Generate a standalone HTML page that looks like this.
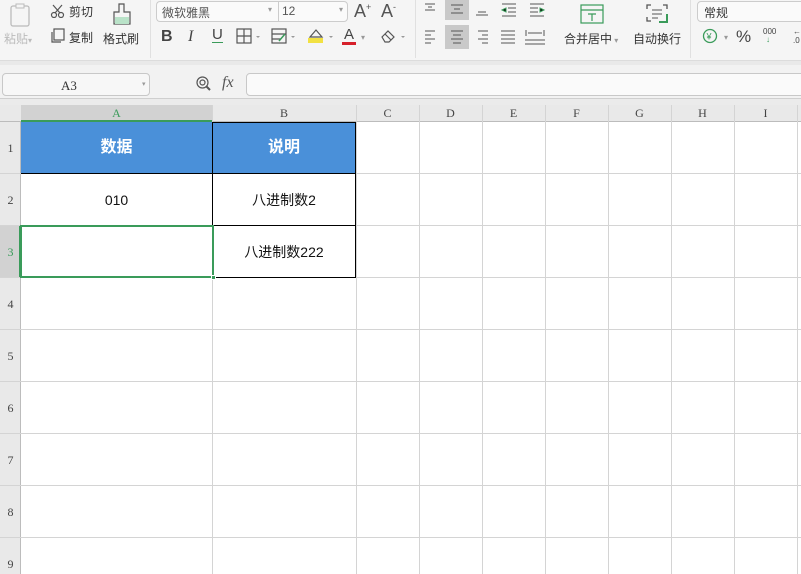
<!DOCTYPE html>
<html><head><meta charset="utf-8"><style>
*{margin:0;padding:0;box-sizing:border-box}
body{width:801px;height:574px;overflow:hidden;background:#fff;position:relative;font-family:"Liberation Sans","Noto Sans CJK SC",sans-serif;font-size:12px;color:#333}
.a{position:absolute}
.t{position:absolute;white-space:nowrap}
.vl{position:absolute;width:1px;background:#d4d4d4}
.hl{position:absolute;height:1px;background:#d4d4d4}
.ch{position:absolute;top:105px;height:17px;text-align:center;font-family:"Liberation Serif",serif;font-size:12px;color:#444;line-height:17px}
.rh{position:absolute;left:0;width:21px;text-align:center;font-family:"Liberation Serif",serif;font-size:12px;color:#444}
.ic{stroke:#555;fill:none;stroke-width:1.2}
</style></head><body>
<!-- toolbar -->
<div class="a" style="left:0;top:0;width:801px;height:60px;background:#f5f5f5"></div>
<div class="a" style="left:0;top:60px;width:801px;height:5px;background:#e9e9e9;border-top:1px solid #dcdcdc"></div>
<div class="a" style="left:0;top:65px;width:801px;height:34px;background:#f2f2f2;border-bottom:1px solid #cfcfcf"></div>
<div class="a" style="left:0;top:99px;width:801px;height:6px;background:#ebebeb"></div>
<!-- separators -->
<div class="a" style="left:150px;top:0;width:1px;height:58px;background:#e0e0e0"></div>
<div class="a" style="left:415px;top:0;width:1px;height:58px;background:#e0e0e0"></div>
<div class="a" style="left:690px;top:0;width:1px;height:58px;background:#e0e0e0"></div>
<!-- paste -->
<svg class="a" style="left:6px;top:2px" width="30" height="28"><rect x="5" y="4" width="18" height="20" rx="2" stroke="#bbb" fill="none" stroke-width="1.3"/><rect x="10" y="2" width="8" height="4" stroke="#bbb" fill="#f5f5f5"/></svg>
<div class="t" style="left:4px;top:30px;color:#bbb">粘贴<span style="font-size:8px">▾</span></div>
<svg class="a" style="left:50px;top:4px" width="16" height="14"><circle cx="4" cy="11" r="2.5" class="ic"/><circle cx="11" cy="11" r="2.5" class="ic"/><path d="M5 9 L12 1 M10 9 L3 1" class="ic"/></svg>
<div class="t" style="left:69px;top:3px;color:#333">剪切</div>
<svg class="a" style="left:50px;top:28px" width="16" height="16"><rect x="4" y="1" width="10" height="11" class="ic"/><path d="M2 4 V14 H11" class="ic"/></svg>
<div class="t" style="left:69px;top:29px">复制</div>
<svg class="a" style="left:110px;top:2px" width="24" height="26"><path d="M9 2 H14 V10 H20 V22 H4 V10 H9 Z" stroke="#555" fill="none" stroke-width="1.2"/><rect x="5" y="15" width="14" height="7" fill="#b9e2c8"/></svg>
<div class="t" style="left:103px;top:30px">格式刷</div>
<!-- font boxes -->
<div class="a" style="left:156px;top:1px;width:122px;height:21px;border:1px solid #ccc;border-right:none;border-radius:4px 0 0 4px;background:#fafafa"></div>
<div class="t" style="left:162px;top:4px;color:#555">微软雅黑</div>
<div class="t" style="left:268px;top:5px;font-size:8px;color:#999">▾</div>
<div class="a" style="left:278px;top:1px;width:70px;height:21px;border:1px solid #ccc;border-radius:0 4px 4px 0;background:#fafafa"></div>
<div class="t" style="left:282px;top:4px;color:#555">12</div>
<div class="t" style="left:339px;top:5px;font-size:8px;color:#999">▾</div>
<div class="t" style="left:354px;top:1px;font-size:18px;color:#555">A<sup style="font-size:9px">+</sup></div>
<div class="t" style="left:381px;top:1px;font-size:18px;color:#555">A<sup style="font-size:9px">-</sup></div>
<div class="t" style="left:161px;top:28px;font-size:16px;font-weight:bold;color:#444">B</div>
<div class="t" style="left:188px;top:28px;font-size:16px;font-style:italic;font-family:'Liberation Serif',serif;color:#444">I</div>
<div class="t" style="left:212px;top:27px;font-size:15px;color:#444;border-bottom:1px solid #3a9b5a;line-height:15px">U</div>
<svg class="a" style="left:236px;top:28px" width="30" height="16"><rect x="1" y="1" width="14" height="14" class="ic"/><path d="M8 1V15M1 8H15" class="ic"/><path d="M20 8l2 2 2-2" fill="#999"/></svg>
<svg class="a" style="left:271px;top:28px" width="30" height="16"><rect x="1" y="1" width="14" height="14" class="ic"/><path d="M1 6H15M1 11H10" class="ic"/><path d="M8 13 L14 6" stroke="#3a9b5a" stroke-width="1.5"/><path d="M20 8l2 2 2-2" fill="#999"/></svg>
<svg class="a" style="left:306px;top:27px" width="34" height="18"><path d="M4 10 L10 3 L16 10 Z" class="ic"/><rect x="2" y="11" width="15" height="5" fill="#f2e142"/><path d="M23 9l2 2 2-2" fill="#999"/></svg>
<div class="t" style="left:344px;top:26px;font-size:15px;color:#444">A</div>
<div class="a" style="left:342px;top:42px;width:14px;height:3px;background:#d6202a"></div>
<div class="t" style="left:361px;top:33px;font-size:8px;color:#999">▾</div>
<svg class="a" style="left:379px;top:28px" width="30" height="16"><path d="M3 9 L9 3 L15 9 L10 14 H6 Z M6 6 L12 12" class="ic"/><path d="M22 8l2 2 2-2" fill="#999"/></svg>
<!-- alignment -->
<div class="a" style="left:445px;top:0px;width:24px;height:20px;background:#c9c9c9"></div>
<div class="a" style="left:445px;top:25px;width:24px;height:24px;background:#c9c9c9"></div>
<svg class="a" style="left:420px;top:0" width="135" height="50">
<g stroke="#555" stroke-width="1">
<path d="M5 4H15M8 7H12M5 10H15"/>
<path d="M31 5H43M34 9H40M31 13H43"/>
<path d="M58 12H66M56 15H68"/>
<path d="M82 4H96M88 8H96M88 12H96M82 16H96"/><path d="M82 10 L86 8 L86 12Z" stroke="#3a9b5a"/>
<path d="M110 4H124M110 8H118M110 12H118M110 16H124"/><path d="M124 10 L120 8 L120 12Z" stroke="#3a9b5a"/>
<path d="M5 31H15M5 35H11M5 39H15M5 43H11"/>
<path d="M31 31H43M33 35H41M31 39H43M33 43H41"/>
<path d="M58 31H68M62 35H68M58 39H68M62 43H68"/>
<path d="M81 31H95M81 35H95M81 39H95M81 43H95"/>
<path d="M105 40H125M105 44H125M106 30V36M124 30V36M108 33H122" />
</g></svg>
<svg class="a" style="left:579px;top:3px" width="26" height="22"><rect x="2" y="2" width="22" height="18" fill="none" stroke="#3a9b5a" stroke-width="1.2"/><path d="M2 7H24M9 11H17M13 11V18" stroke="#3a9b5a" stroke-width="1.2"/></svg>
<div class="t" style="left:564px;top:30px">合并居中<span style="font-size:8px;color:#999"> ▾</span></div>
<svg class="a" style="left:643px;top:2px" width="28" height="24"><path d="M4 7V3H8M20 3H24V7M4 15V19H8" stroke="#555" fill="none" stroke-width="1.3"/><path d="M9 8H19M9 12H19M9 16H15" stroke="#555"/><path d="M24 12V20H16" stroke="#3a9b5a" stroke-width="2" fill="none"/></svg>
<div class="t" style="left:633px;top:30px">自动换行</div>
<div class="a" style="left:697px;top:1px;width:110px;height:21px;border:1px solid #ccc;border-radius:4px;background:#fafafa"></div>
<div class="t" style="left:704px;top:4px">常规</div>
<svg class="a" style="left:702px;top:28px" width="18" height="18"><circle cx="8" cy="8" r="6.5" stroke="#3a9b5a" fill="none" stroke-width="1.3"/><text x="4.5" y="11.5" font-size="9" fill="#3a9b5a" font-family="Liberation Sans">¥</text></svg>
<div class="t" style="left:724px;top:33px;font-size:8px;color:#999">▾</div>
<div class="t" style="left:736px;top:27px;font-size:17px;color:#444">%</div>
<div class="t" style="left:763px;top:27px;font-size:8px;color:#444">000</div>
<div class="t" style="left:766px;top:35px;font-size:8px;color:#3a9b5a">↓</div>
<div class="t" style="left:793px;top:27px;font-size:8px;color:#444">←<br>.0</div>
<!-- name box -->
<div class="a" style="left:2px;top:73px;width:148px;height:23px;border:1px solid #c8c8c8;border-radius:4px;background:#f7f7f7"></div>
<div class="t" style="left:61px;top:78px;font-family:'Liberation Serif',serif;font-size:13px;color:#333">A3</div>
<div class="t" style="left:142px;top:80px;font-size:7px;color:#999">▾</div>
<svg class="a" style="left:195px;top:75px" width="18" height="18"><circle cx="7.5" cy="7.5" r="5.5" class="ic" stroke-width="1.5"/><circle cx="7.5" cy="7.5" r="2.5" class="ic"/><path d="M11 11L15 15" stroke="#555" stroke-width="2"/></svg>
<div class="t" style="left:222px;top:74px;font-family:'Liberation Serif',serif;font-style:italic;font-size:16px;color:#555">fx</div>
<div class="a" style="left:246px;top:73px;width:560px;height:23px;border:1px solid #c8c8c8;border-radius:4px;background:#fafafa"></div>
<!-- column header -->
<div class="a" style="left:0;top:105px;width:801px;height:17px;background:#e9e9e9;border-bottom:1px solid #bcbcbc"></div>
<div class="a" style="left:21px;top:105px;width:191px;height:17px;background:#d2d2d2;border-bottom:2px solid #3a9b5a"></div>
<div class="ch" style="left:21px;width:191px;color:#3a9b5a">A</div>
<div class="ch" style="left:212px;width:144px">B</div>
<div class="ch" style="left:356px;width:63px">C</div>
<div class="ch" style="left:419px;width:63px">D</div>
<div class="ch" style="left:482px;width:63px">E</div>
<div class="ch" style="left:545px;width:63px">F</div>
<div class="ch" style="left:608px;width:63px">G</div>
<div class="ch" style="left:671px;width:63px">H</div>
<div class="ch" style="left:734px;width:63px">I</div>
<!-- row header -->
<div class="a" style="left:0;top:122px;width:21px;height:452px;background:#e9e9e9;border-right:1px solid #bcbcbc"></div>
<div class="a" style="left:0;top:226px;width:21px;height:52px;background:#d2d2d2;border-right:2px solid #3a9b5a"></div>
<!-- grid lines -->
<div class="vl" style="left:212px;top:105px;height:469px"></div>
<div class="vl" style="left:356px;top:105px;height:469px"></div>
<div class="vl" style="left:419px;top:105px;height:469px"></div>
<div class="vl" style="left:482px;top:105px;height:469px"></div>
<div class="vl" style="left:545px;top:105px;height:469px"></div>
<div class="vl" style="left:608px;top:105px;height:469px"></div>
<div class="vl" style="left:671px;top:105px;height:469px"></div>
<div class="vl" style="left:734px;top:105px;height:469px"></div>
<div class="vl" style="left:797px;top:105px;height:469px"></div>
<div class="hl" style="left:0;top:173px;width:801px"></div>
<div class="hl" style="left:0;top:225px;width:801px"></div>
<div class="hl" style="left:0;top:277px;width:801px"></div>
<div class="hl" style="left:0;top:329px;width:801px"></div>
<div class="hl" style="left:0;top:381px;width:801px"></div>
<div class="hl" style="left:0;top:433px;width:801px"></div>
<div class="hl" style="left:0;top:485px;width:801px"></div>
<div class="hl" style="left:0;top:537px;width:801px"></div>
<!-- row numbers -->
<div class="rh" style="top:141px">1</div>
<div class="rh" style="top:193px">2</div>
<div class="rh" style="top:245px;color:#3a9b5a">3</div>
<div class="rh" style="top:297px">4</div>
<div class="rh" style="top:349px">5</div>
<div class="rh" style="top:401px">6</div>
<div class="rh" style="top:453px">7</div>
<div class="rh" style="top:505px">8</div>
<div class="rh" style="top:557px">9</div>
<!-- table -->
<div class="a" style="left:21px;top:122px;width:335px;height:52px;background:#4a90d9"></div>
<div class="a" style="left:212px;top:122px;width:144px;height:156px;border:1px solid #000"></div>
<div class="a" style="left:21px;top:173px;width:335px;height:1px;background:#000"></div>
<div class="a" style="left:21px;top:225px;width:335px;height:1px;background:#000"></div>
<div class="a" style="left:21px;top:122px;width:191px;height:52px;line-height:52px;text-align:center;color:#fff;font-weight:bold;font-size:16px">数据</div>
<div class="a" style="left:212px;top:122px;width:144px;height:52px;line-height:52px;text-align:center;color:#fff;font-weight:bold;font-size:16px">说明</div>
<div class="a" style="left:21px;top:174px;width:191px;height:52px;line-height:52px;text-align:center;font-size:14px;color:#111">010</div>
<div class="a" style="left:212px;top:174px;width:144px;height:52px;line-height:52px;text-align:center;font-size:14px;color:#111">八进制数2</div>
<div class="a" style="left:212px;top:226px;width:144px;height:52px;line-height:52px;text-align:center;font-size:14px;color:#111">八进制数222</div>
<!-- selection -->
<div class="a" style="left:20px;top:225px;width:194px;height:53px;border:2px solid #3a9b5a"></div>
<div class="a" style="left:211px;top:275px;width:5px;height:5px;background:#3a9b5a;border:1px solid #fff"></div>
</body></html>
